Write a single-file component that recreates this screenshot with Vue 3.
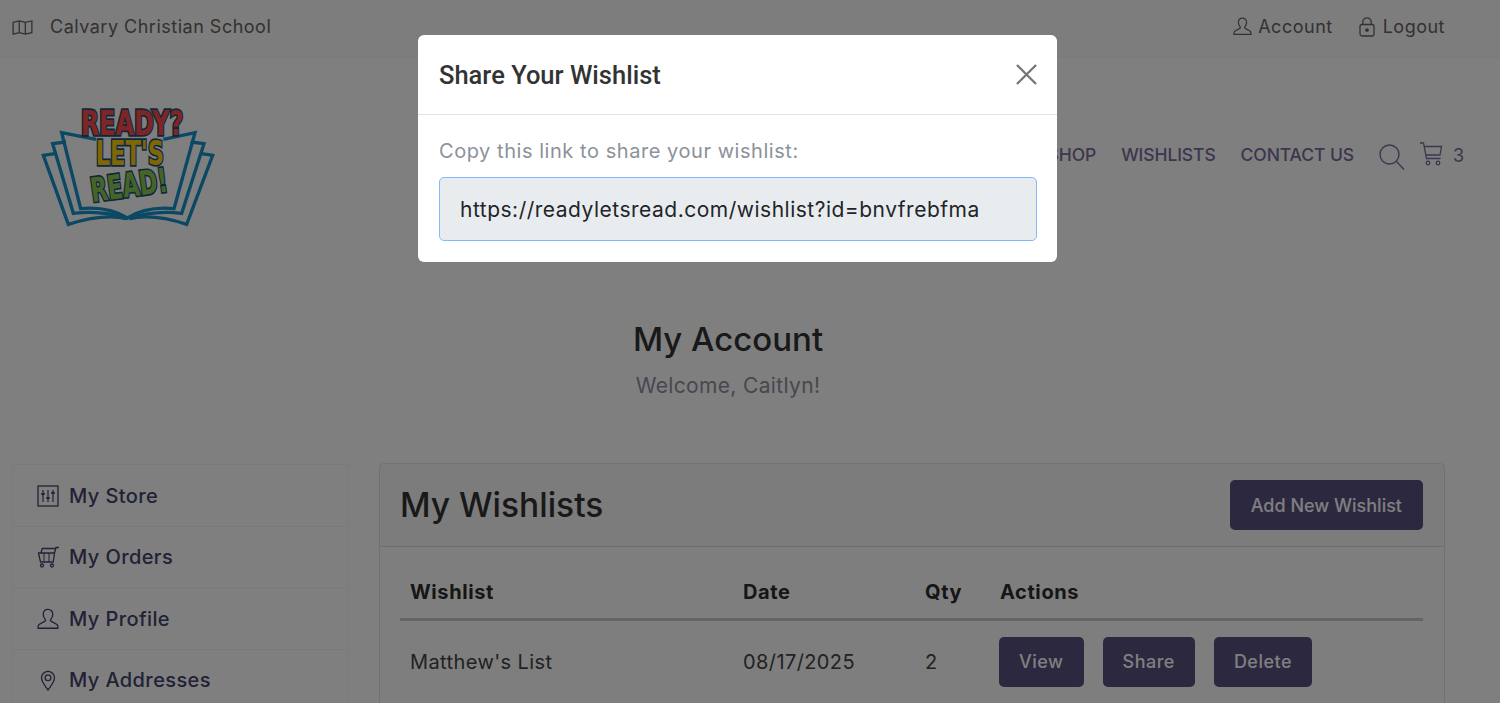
<script setup>
const sidebar = [
  { label: 'My Store', icon: 'store' },
  { label: 'My Orders', icon: 'orders' },
  { label: 'My Profile', icon: 'user' },
  { label: 'My Addresses', icon: 'pin' }
]
const actions = ['View', 'Share', 'Delete']
</script>

<template>
  <div class="page">
    <header class="topbar">
      <div class="top-left">
        <svg class="ic-map" viewBox="0 0 22 16" fill="none" stroke="currentColor" stroke-width="1.400">
          <path d="M1 2.500 L7.500 1 L14 2.500 L21 1 V13.500 L14 15 L7.500 13.500 L1 15 Z" />
          <path d="M7.500 1 V13.500 M14 2.500 V15" />
        </svg>
        <span>Calvary Christian School</span>
      </div>
      <div class="top-right">
        <a class="top-link">
          <svg class="ic-top" viewBox="0 0 20 20" fill="none" stroke="currentColor" stroke-width="1.3">
            <path d="M10 1.2c-2.7 0-4.3 2-4.3 4.6 0 1.800.8 3.300 1.700 4.300.5.600.4 1.400 0 1.800-.5.500-4.700 2-5.700 3.300-.5.700-.7 2-.7 3.200h18c0-1.200-.2-2.500-.7-3.200-1-1.300-5.200-2.800-5.700-3.300-.4-.4-.5-1.200 0-1.800.9-1 1.700-2.500 1.700-4.300 0-2.600-1.600-4.600-4.300-4.600z" />
          </svg>
          <span>Account</span>
        </a>
        <a class="top-link lock-link">
          <svg class="ic-lock" viewBox="0 0 16 20" fill="none" stroke="currentColor" stroke-width="1.3">
            <rect x="1" y="7.500" width="14" height="11.500" rx="2" />
            <path d="M3.800 7.500V5a4.200 4.200 0 0 1 8.400 0v2.500" />
            <circle cx="8" cy="13" r="1.200" fill="currentColor" />
          </svg>
          <span>Logout</span>
        </a>
      </div>
    </header>

    <div class="mainhead">
      <svg class="logo" viewBox="0 0 600 420" role="img" aria-label="Ready? Let's Read!">
        <g fill="none" stroke="#1690c8" stroke-width="10" stroke-linejoin="miter">
          <path d="M198 130 L95 110 L152 338 Q235 330 292 366 Q350 330 432 338 L495 110 L400 130" />
          <path d="M108 138 L68 143 L130 352 Q220 342 290 368 M482 138 L522 143 L455 352 Q370 342 298 368" />
          <path d="M80 172 L40 178 L115 385 Q220 352 290 368 M510 172 L548 178 L470 385 Q370 352 298 368" />
        </g>
        <g>
          <text x="152" y="116" textLength="308" lengthAdjust="spacingAndGlyphs" class="lt red">READY?</text>
          <text x="197" y="208" textLength="205" lengthAdjust="spacingAndGlyphs" class="lt yellow">LET'S</text>
          <text x="187" y="318" textLength="232" lengthAdjust="spacingAndGlyphs" transform="rotate(-8 187 318)" class="lt green">READ!</text>
        </g>
      </svg>
      <nav class="nav">
        <a>SHOP</a>
        <a>WISHLISTS</a>
        <a>CONTACT US</a>
        <svg class="ic-search" viewBox="0 0 26 26" fill="none" stroke="currentColor" stroke-width="1.400">
          <circle cx="10.500" cy="10.500" r="9.500" />
          <path d="M17.500 17.500 L25 25.500" />
        </svg>
        <svg class="ic-cart" viewBox="0 0 24 24" fill="none" stroke="currentColor" stroke-width="1.300">
          <path d="M1 1h3.500l3 15.500h14M5 4.500h17.500l-1.500 8.500H6.700" />
          <circle cx="9" cy="21" r="1.800" />
          <circle cx="19" cy="21" r="1.800" />
        </svg>
        <span class="count">3</span>
      </nav>
    </div>

    <section class="title">
      <h1>My Account</h1>
      <p>Welcome, Caitlyn!</p>
    </section>

    <div class="content">
      <aside class="sidebar">
        <a v-for="item in sidebar" :key="item.label" class="side-item">
          <svg v-if="item.icon === 'store'" class="side-ic" viewBox="0 0 22 22" fill="none" stroke="currentColor" stroke-width="1.300">
            <rect x="1" y="1" width="20" height="20" />
            <path d="M6 5v12M11 5v12M16 5v12" stroke-width="1.200" />
            <path d="M4.300 9h3.400M9.300 13h3.400M14.300 8h3.400" stroke-width="1.800" />
          </svg>
          <svg v-else-if="item.icon === 'orders'" class="side-ic" viewBox="0 0 22 22" fill="none" stroke="currentColor" stroke-width="1.300">
            <path d="M1 7h16.500l-1.300 9H3.500L1.500 7M4 7l1.200-4.500h12.800M17.500 7l1.500-5.500H22" />
            <path d="M7 7v9M12 7v9" stroke-width="1" />
            <circle cx="5" cy="19.500" r="1.500" />
            <circle cx="15" cy="19.500" r="1.500" />
          </svg>
          <svg v-else-if="item.icon === 'user'" class="side-ic" viewBox="0 0 20 20" fill="none" stroke="currentColor" stroke-width="1.200">
            <path d="M10 1.200c-2.700 0-4.300 2-4.300 4.600 0 1.800.8 3.300 1.700 4.300.5.600.4 1.400 0 1.800-.5.500-4.700 2-5.700 3.300-.5.700-.7 2-.7 3.200h18c0-1.200-.2-2.500-.7-3.200-1-1.300-5.200-2.800-5.700-3.300-.4-.4-.5-1.200 0-1.800.9-1 1.700-2.500 1.700-4.300 0-2.600-1.600-4.600-4.300-4.600z" />
          </svg>
          <svg v-else class="side-ic" viewBox="0 0 22 22" fill="none" stroke="currentColor" stroke-width="1.300">
            <path d="M11 21c-3-4.200-6.500-8-6.500-12.200a6.500 6.500 0 0 1 13 0C17.500 13 14 16.800 11 21z" />
            <circle cx="11" cy="8.700" r="2.900" />
          </svg>
          <span>{{ item.label }}</span>
        </a>
      </aside>

      <main class="card">
        <div class="card-head">
          <h2>My Wishlists</h2>
          <button class="btn btn-add">Add New Wishlist</button>
        </div>
        <div class="card-body">
          <div class="row row-head">
            <div class="c1">Wishlist</div>
            <div class="c2">Date</div>
            <div class="c3">Qty</div>
            <div class="c4">Actions</div>
          </div>
          <div class="row row-body">
            <div class="c1">Matthew's List</div>
            <div class="c2">08/17/2025</div>
            <div class="c3">2</div>
            <div class="c4 btns">
              <button v-for="a in actions" :key="a" class="btn">{{ a }}</button>
            </div>
          </div>
        </div>
      </main>
    </div>

    <div class="overlay">
      <div class="modal">
        <div class="modal-head">
          <h3>Share Your Wishlist</h3>
          <svg class="close" viewBox="0 0 22 22" stroke="currentColor" stroke-width="2.400" fill="none">
            <path d="M1 1 L21 21 M21 1 L1 21" />
          </svg>
        </div>
        <div class="modal-body">
          <p>Copy this link to share your wishlist:</p>
          <div class="field">https://readyletsread.com/wishlist?id=bnvfrebfma</div>
        </div>
      </div>
    </div>
  </div>
</template>

<style>
html, body { margin: 0; height: 100%; overflow: hidden; background: #fff; }
</style>

<style scoped>
.page {
  position: relative;
  height: 703px;
  overflow: hidden;
  font-family: Inter, "Open Sans", sans-serif;
  background: #fff;
}
a { display: inline-block; }
.topbar {
  height: 53px;
  border-bottom: 1px solid #f4f4f4;
  background: #fbfbfb;
  display: flex;
  justify-content: space-between;
  align-items: center;
  padding: 0 55px 4px 12px;
  font-size: 18px;
  letter-spacing: 0.5px;
  color: #6a6260;
}
.top-left { display: flex; align-items: center; gap: 17px; }
.ic-map { width: 21px; height: 15px; margin-top: 2px; }
.top-right { display: flex; gap: 26px; }
.top-link { display: flex; align-items: center; gap: 6px; }
.lock-link { gap: 8px; }
.ic-top { width: 19px; height: 19px; }
.ic-lock { width: 16px; height: 20px; }
.mainhead {
  height: 195px;
  display: flex;
  justify-content: space-between;
  padding: 0 36px 0 30px;
}
.logo { width: 200px; height: 140px; margin-top: 38px; flex: none; }
.lt {
  font-family: "DejaVu Sans", sans-serif;
  font-weight: 700;
  font-size: 100px;
  stroke: #1a5070;
  stroke-width: 10px;
  paint-order: stroke;
}
.red { fill: #ff4a4a; }
.yellow { fill: #ffcc10; }
.green { fill: #8cc850; }
.nav {
  display: flex;
  align-items: center;
  height: 192px;
  font-size: 17.500px;
  letter-spacing: -0.1px;
  font-weight: 500;
  color: #7a6c9c;
}
.nav a { margin-right: 25px; }
.ic-search { width: 26px; height: 26px; margin-right: 14px; margin-top: 5px; }
.ic-cart { width: 24px; height: 24px; margin-right: 10px; }
.count { font-weight: 400; font-size: 18px; margin-top: 2px; }
.title { text-align: center; padding: 66px 44px 0 0; height: 210px; box-sizing: border-box; }
.title h1 { margin: 0; font-size: 33px; line-height: 40px; font-weight: 500; color: #333; }
.title p { margin: 12px 0 0; font-size: 21px; letter-spacing: 0.35px; line-height: 30px; color: #8f8f9f; }
.content {
  display: flex;
  align-items: flex-start;
  gap: 30px;
  padding: 0 55px 0 12px;
}
.sidebar { width: 337px; flex: none; padding-top: 1px; }
.side-item {
  display: flex;
  align-items: center;
  gap: 10px;
  height: 61.500px;
  padding-left: 24px;
  box-sizing: border-box;
  border: 1px solid #f4f4f4;
  border-top: 0;
  font-size: 20px;
  letter-spacing: 0.4px;
  font-weight: 500;
  color: #44446c;
}
.side-item:first-child { border-top: 1px solid #f4f4f4; height: 63px; }
.side-ic { width: 22px; height: 22px; flex: none; }
.card {
  flex: 1;
  min-width: 0;
  height: 300px;
  border: 1px solid #e2e2e2;
  border-radius: 5px;
  box-sizing: border-box;
  background: #fcfcfc;
}
.card-head {
  height: 82px;
  display: flex;
  align-items: center;
  justify-content: space-between;
  padding: 0 21px 0 20px;
  border-bottom: 1px solid #dcdcdc;
  background: #f8f8f8;
  border-radius: 5px 5px 0 0;
}
.card-head h2 { margin: 0; font-size: 33.500px; font-weight: 500; color: #333; }
.btn {
  height: 50px;
  border: 0;
  border-radius: 5px;
  background: #58507f;
  color: #fff;
  font: 500 18px Inter, sans-serif;
  letter-spacing: 0.5px;
  padding: 0 20px;
}
.btn-add { letter-spacing: 0; padding: 0 21px; }
.card-body { padding: 19px 21px 0 20px; }
.row { display: flex; align-items: center; font-size: 20px; letter-spacing: 0.4px; color: #444; }
.row-head { height: 52px; border-bottom: 3px solid #c9c9c9; font-weight: 700; letter-spacing: 0.6px; color: #2c2c2c; }
.row-body { height: 81px; padding-bottom: 1px; border-bottom: 2px solid #d5d5d5; }
.c1 { width: 343px; padding-left: 10px; box-sizing: border-box; }
.c2 { width: 182px; }
.c3 { width: 75px; }
.c4 { flex: 1; }
.btns { display: flex; gap: 19px; margin-left: -1px; }
.overlay {
  position: absolute;
  inset: 0;
  background: rgba(0, 0, 0, 0.5);
  display: flex;
  justify-content: center;
  align-items: flex-start;
  padding: 35px 25px 0 0;
  box-sizing: border-box;
}
.modal {
  width: 639px;
  background: #fff;
  border-radius: 6px;
}
.modal-head {
  height: 80px;
  box-sizing: border-box;
  border-bottom: 1px solid #dee2e6;
  display: flex;
  align-items: center;
  justify-content: space-between;
  padding: 0 20px 0 21px;
}
.modal-head h3 { margin: 0; font: 500 25.500px Roboto, sans-serif; color: #333; }
.close { width: 21px; height: 21px; color: #757575; }
.modal-body { padding: 21px 20px 21px 21px; }
.modal-body p { margin: 0 0 11px; font-size: 20px; letter-spacing: 0.55px; line-height: 30px; color: #8b929a; }
.field {
  height: 64px;
  box-sizing: border-box;
  background: #e9ecef;
  border: 1px solid #86b7fe;
  border-radius: 5px;
  display: flex;
  align-items: center;
  padding-left: 20px;
  font-size: 21px;
  letter-spacing: 0.5px;
  color: #212529;
}
</style>
